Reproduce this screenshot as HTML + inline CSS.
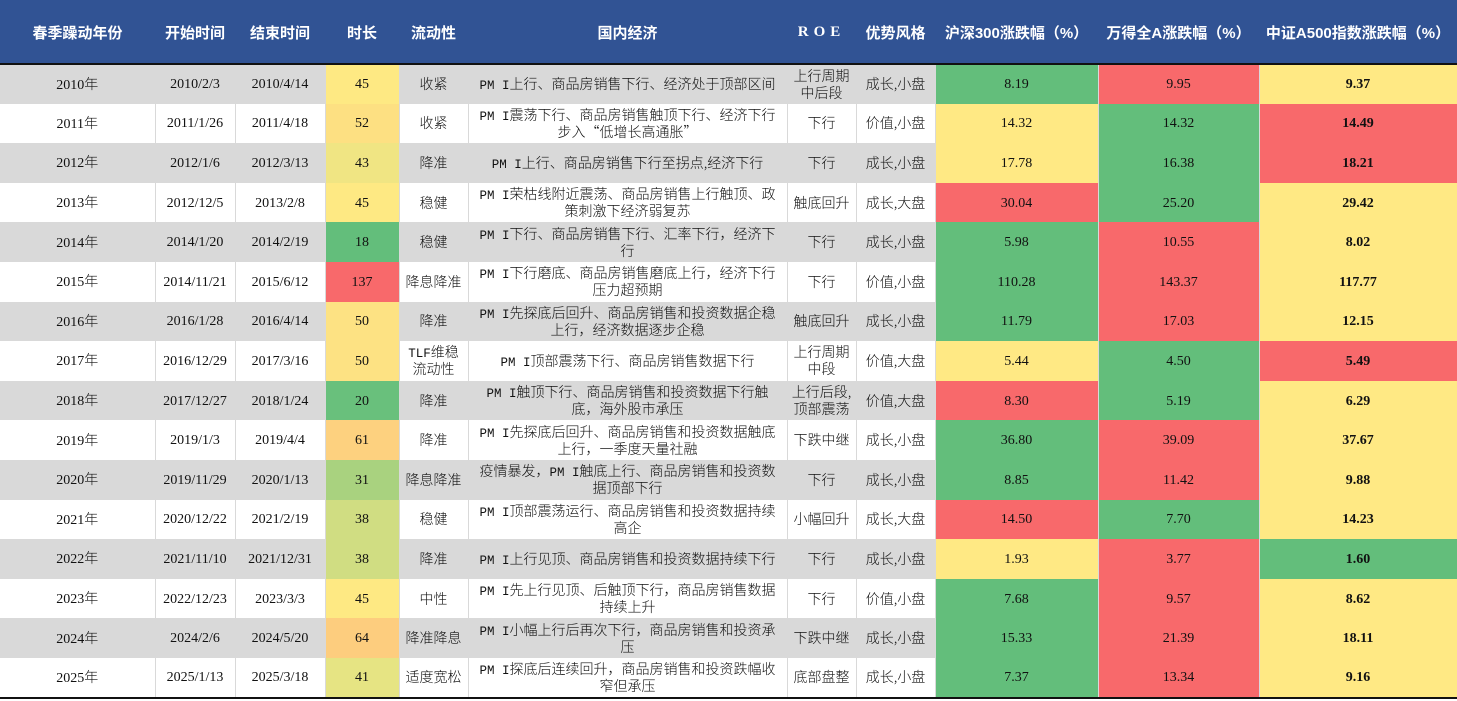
<!DOCTYPE html>
<html><head><meta charset="utf-8"><style>
*{margin:0;padding:0;box-sizing:border-box}
body{width:1457px;height:701px;background:#fff;overflow:hidden;font-family:"Liberation Serif","Noto Sans CJK SC",serif;color:#111}
table{border-collapse:collapse;table-layout:fixed;width:1457px}
th{background:#315394;color:#fff;font-family:"Liberation Sans","Noto Sans CJK SC",sans-serif;font-weight:bold;font-size:15px;height:64px;border-bottom:2px solid #111;text-align:center;padding-top:2px}
td{height:39.6px;font-size:14px;line-height:17px;text-align:center;border-right:1px solid #d9d9d9;padding:1px 2px 0;overflow:hidden}
td *{line-height:17px}
tr.g td{background:#d9d9d9}
tr:last-child td{border-bottom:2px solid #111}
.cn{font-family:"Noto Sans CJK SC",sans-serif;font-size:14px;font-weight:300}
td.e{padding:1px 9px 0}
.m{font-family:"Liberation Mono",monospace;font-size:12.5px;font-weight:400;line-height:1}
.G{background:#63be7b!important}.R{background:#f8696b!important}.Y{background:#ffe984!important}
td.b{font-weight:bold}
</style></head><body>
<table>
<colgroup><col style="width:155px"><col style="width:80px"><col style="width:90px"><col style="width:74px"><col style="width:69px"><col style="width:319px"><col style="width:69px"><col style="width:79px"><col style="width:163px"><col style="width:161px"><col style="width:198px"></colgroup>
<tr><th>春季躁动年份</th><th>开始时间</th><th>结束时间</th><th>时长</th><th>流动性</th><th>国内经济</th><th style="font-family:'Liberation Serif',serif;letter-spacing:5px">ROE</th><th>优势风格</th><th>沪深300涨跌幅（%）</th><th>万得全A涨跌幅（%）</th><th>中证A500指数涨跌幅（%）</th></tr>
<tr class="g"><td>2010<span class="cn">年</span></td><td>2010/2/3</td><td>2010/4/14</td><td style="background:#fee983">45</td><td class="cn">收紧</td><td class="cn e"><span class="m">PM I</span>上行、商品房销售下行、经济处于顶部区间</td><td class="cn">上行周期中后段</td><td class="cn">成长,小盘</td><td class="G">8.19</td><td class="R">9.95</td><td class="Y b">9.37</td></tr>
<tr><td>2011<span class="cn">年</span></td><td>2011/1/26</td><td>2011/4/18</td><td style="background:#fde082">52</td><td class="cn">收紧</td><td class="cn e"><span class="m">PM I</span>震荡下行、商品房销售触顶下行、经济下行步入“低增长高通胀”</td><td class="cn">下行</td><td class="cn">价值,小盘</td><td class="Y">14.32</td><td class="G">14.32</td><td class="R b">14.49</td></tr>
<tr class="g"><td>2012<span class="cn">年</span></td><td>2012/1/6</td><td>2012/3/13</td><td style="background:#f0e583">43</td><td class="cn">降准</td><td class="cn e"><span class="m">PM I</span>上行、商品房销售下行至拐点,经济下行</td><td class="cn">下行</td><td class="cn">成长,小盘</td><td class="Y">17.78</td><td class="G">16.38</td><td class="R b">18.21</td></tr>
<tr><td>2013<span class="cn">年</span></td><td>2012/12/5</td><td>2013/2/8</td><td style="background:#fee983">45</td><td class="cn">稳健</td><td class="cn e"><span class="m">PM I</span>荣枯线附近震荡、商品房销售上行触顶、政策刺激下经济弱复苏</td><td class="cn">触底回升</td><td class="cn">成长,大盘</td><td class="R">30.04</td><td class="G">25.20</td><td class="Y b">29.42</td></tr>
<tr class="g"><td>2014<span class="cn">年</span></td><td>2014/1/20</td><td>2014/2/19</td><td style="background:#63be7b">18</td><td class="cn">稳健</td><td class="cn e"><span class="m">PM I</span>下行、商品房销售下行、汇率下行，经济下行</td><td class="cn">下行</td><td class="cn">成长,小盘</td><td class="G">5.98</td><td class="R">10.55</td><td class="Y b">8.02</td></tr>
<tr><td>2015<span class="cn">年</span></td><td>2014/11/21</td><td>2015/6/12</td><td style="background:#f8696b">137</td><td class="cn">降息降准</td><td class="cn e"><span class="m">PM I</span>下行磨底、商品房销售磨底上行，经济下行压力超预期</td><td class="cn">下行</td><td class="cn">价值,小盘</td><td class="G">110.28</td><td class="R">143.37</td><td class="Y b">117.77</td></tr>
<tr class="g"><td>2016<span class="cn">年</span></td><td>2016/1/28</td><td>2016/4/14</td><td style="background:#fde283">50</td><td class="cn">降准</td><td class="cn e"><span class="m">PM I</span>先探底后回升、商品房销售和投资数据企稳上行，经济数据逐步企稳</td><td class="cn">触底回升</td><td class="cn">成长,小盘</td><td class="G">11.79</td><td class="R">17.03</td><td class="Y b">12.15</td></tr>
<tr><td>2017<span class="cn">年</span></td><td>2016/12/29</td><td>2017/3/16</td><td style="background:#fde283">50</td><td class="cn"><span class="m">TLF</span>维稳流动性</td><td class="cn e"><span class="m">PM I</span>顶部震荡下行、商品房销售数据下行</td><td class="cn">上行周期中段</td><td class="cn">价值,大盘</td><td class="Y">5.44</td><td class="G">4.50</td><td class="R b">5.49</td></tr>
<tr class="g"><td>2018<span class="cn">年</span></td><td>2017/12/27</td><td>2018/1/24</td><td style="background:#69c07c">20</td><td class="cn">降准</td><td class="cn e"><span class="m">PM I</span>触顶下行、商品房销售和投资数据下行触底，海外股市承压</td><td class="cn">上行后段,顶部震荡</td><td class="cn">价值,大盘</td><td class="R">8.30</td><td class="G">5.19</td><td class="Y b">6.29</td></tr>
<tr><td>2019<span class="cn">年</span></td><td>2019/1/3</td><td>2019/4/4</td><td style="background:#fdd17f">61</td><td class="cn">降准</td><td class="cn e"><span class="m">PM I</span>先探底后回升、商品房销售和投资数据触底上行，一季度天量社融</td><td class="cn">下跌中继</td><td class="cn">成长,小盘</td><td class="G">36.80</td><td class="R">39.09</td><td class="Y b">37.67</td></tr>
<tr class="g"><td>2020<span class="cn">年</span></td><td>2019/11/29</td><td>2020/1/13</td><td style="background:#a9d27f">31</td><td class="cn">降息降准</td><td class="cn e">疫情暴发，<span class="m">PM I</span>触底上行、商品房销售和投资数据顶部下行</td><td class="cn">下行</td><td class="cn">成长,小盘</td><td class="G">8.85</td><td class="R">11.42</td><td class="Y b">9.88</td></tr>
<tr><td>2021<span class="cn">年</span></td><td>2020/12/22</td><td>2021/2/19</td><td style="background:#d0dd82">38</td><td class="cn">稳健</td><td class="cn e"><span class="m">PM I</span>顶部震荡运行、商品房销售和投资数据持续高企</td><td class="cn">小幅回升</td><td class="cn">成长,大盘</td><td class="R">14.50</td><td class="G">7.70</td><td class="Y b">14.23</td></tr>
<tr class="g"><td>2022<span class="cn">年</span></td><td>2021/11/10</td><td>2021/12/31</td><td style="background:#d0dd82">38</td><td class="cn">降准</td><td class="cn e"><span class="m">PM I</span>上行见顶、商品房销售和投资数据持续下行</td><td class="cn">下行</td><td class="cn">成长,小盘</td><td class="Y">1.93</td><td class="R">3.77</td><td class="G b">1.60</td></tr>
<tr><td>2023<span class="cn">年</span></td><td>2022/12/23</td><td>2023/3/3</td><td style="background:#fee983">45</td><td class="cn">中性</td><td class="cn e"><span class="m">PM I</span>先上行见顶、后触顶下行，商品房销售数据持续上升</td><td class="cn">下行</td><td class="cn">价值,小盘</td><td class="G">7.68</td><td class="R">9.57</td><td class="Y b">8.62</td></tr>
<tr class="g"><td>2024<span class="cn">年</span></td><td>2024/2/6</td><td>2024/5/20</td><td style="background:#fdcd7e">64</td><td class="cn">降准降息</td><td class="cn e"><span class="m">PM I</span>小幅上行后再次下行，商品房销售和投资承压</td><td class="cn">下跌中继</td><td class="cn">成长,小盘</td><td class="G">15.33</td><td class="R">21.39</td><td class="Y b">18.11</td></tr>
<tr><td>2025<span class="cn">年</span></td><td>2025/1/13</td><td>2025/3/18</td><td style="background:#e6e483">41</td><td class="cn">适度宽松</td><td class="cn e"><span class="m">PM I</span>探底后连续回升，商品房销售和投资跌幅收窄但承压</td><td class="cn">底部盘整</td><td class="cn">成长,小盘</td><td class="G">7.37</td><td class="R">13.34</td><td class="Y b">9.16</td></tr>
</table>
</body></html>
